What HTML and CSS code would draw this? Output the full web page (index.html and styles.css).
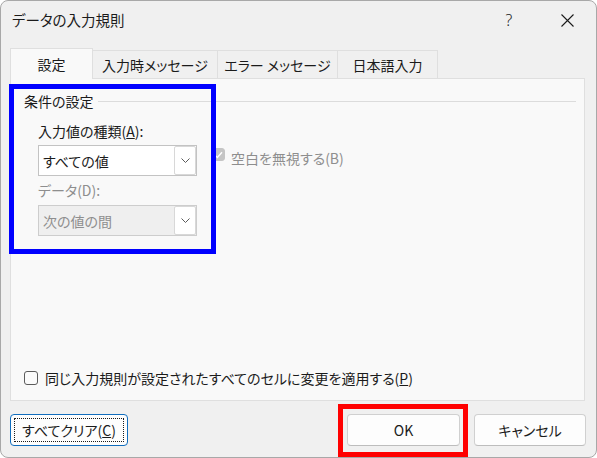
FILE: index.html
```
<!DOCTYPE html>
<html lang="ja">
<head>
<meta charset="utf-8">
<title>データの入力規則</title>
<link rel="stylesheet" href="styles.css">
</head>
<body>
<div class="window">
  <div class="titlebar">
    <span class="title">データの入力規則</span>
    <span class="cap help">?</span>
    <span class="cap close">
      <svg width="13" height="13" viewBox="0 0 13 13"><path d="M0.5 0.5 L12.5 12.5 M12.5 0.5 L0.5 12.5" stroke="#1b1b1b" stroke-width="1.1" fill="none"/></svg>
    </span>
  </div>

  <div class="tabs">
    <div class="tab active tab-1">設定</div>
    <div class="tab tab-2">入力時メッセージ</div>
    <div class="tab tab-3">エラー メッセージ</div>
    <div class="tab tab-4">日本語入力</div>
  </div>

  <div class="panel">
    <div class="group-head">
      <span class="group-label">条件の設定</span>
      <span class="group-line"></span>
    </div>
    <div class="group-body">
      <div class="field-label">入力値の種類(<u>A</u>):</div>
      <div class="row">
        <div class="combo">
          <span class="combo-text">すべての値</span>
          <span class="combo-btn">
            <svg width="9" height="5" viewBox="0 0 9 5"><path d="M0.5 0.5 L4.5 4.5 L8.5 0.5" stroke="#5a5a5a" stroke-width="1" fill="none"/></svg>
          </span>
        </div>
        <div class="check disabled">
          <span class="box checked">
            <svg width="9" height="8" viewBox="0 0 9 8"><path d="M1 4.2 L3.4 6.5 L8 1.2" stroke="#ffffff" stroke-width="1.4" fill="none"/></svg>
          </span>
          <span>空白を無視する(B)</span>
        </div>
      </div>
      <div class="field-label disabled">データ(D):</div>
      <div class="combo disabled combo-2">
        <span class="combo-text">次の値の間</span>
        <span class="combo-btn">
          <svg width="9" height="5" viewBox="0 0 9 5"><path d="M0.5 0.5 L4.5 4.5 L8.5 0.5" stroke="#5a5a5a" stroke-width="1" fill="none"/></svg>
        </span>
      </div>
    </div>
    <div class="apply">
      <span class="box"></span>
      <span>同じ入力規則が設定されたすべてのセルに変更を適用する(<u>P</u>)</span>
    </div>
  </div>

  <div class="buttons">
    <button class="btn btn-clear"><span class="focus-ring">すべてクリア(<u>C</u>)</span></button>
    <button class="btn btn-ok">OK</button>
    <button class="btn btn-cancel">キャンセル</button>
  </div>

  <div class="mark mark-blue"></div>
  <div class="mark mark-red"></div>
</div>
</body>
</html>
```

FILE: styles.css
```
html, body {
  margin: 0;
  padding: 0;
  background: #ffffff;
}

body {
  font-family: "Noto Sans CJK JP", "Noto Sans", sans-serif;
  font-size: 14px;
  color: #1b1b1b;
  font-feature-settings: "palt";
}

.window {
  position: relative;
  box-sizing: border-box;
  width: 597px;
  height: 458px;
  border: 1px solid #a8a8a8;
  border-radius: 8px;
  background: #f0f0f0;
  display: flex;
  flex-direction: column;
  overflow: hidden;
}

/* title bar */
.titlebar {
  height: 38px;
  display: flex;
  align-items: center;
  padding: 0 6px 0 11px;
  flex-shrink: 0;
}

.title {
  flex: 1;
  line-height: 20px;
  font-size: 14.5px;
}

.cap {
  width: 46px;
  height: 38px;
  display: flex;
  align-items: center;
  justify-content: center;
}

.help {
  margin-right: 12px;
  font-family: "Noto Sans", sans-serif;
  font-weight: 300;
  font-size: 16px;
}

/* tabs */
.tabs {
  display: flex;
  align-items: flex-end;
  height: 30px;
  margin: 9px 0 0 9px;
  flex-shrink: 0;
}

.tab {
  box-sizing: border-box;
  height: 28px;
  border: 1px solid #dfdfdf;
  border-bottom: none;
  background: #f0f0f0;
  display: flex;
  align-items: center;
  justify-content: center;
  line-height: 20px;
  margin-right: -1px;
}

.tab.active {
  height: 31px;
  background: #f9f9f9;
  margin-bottom: -1px;
  position: relative;
  z-index: 1;
}

.tab-1 { width: 83px; }
.tab-2 { width: 126px; }
.tab-3 { width: 121px; }
.tab-4 { width: 101px; }

/* panel */
.panel {
  box-sizing: border-box;
  height: 323px;
  margin: 0 11px 0 9px;
  border: 1px solid #dfdfdf;
  background: #f9f9f9;
  display: flex;
  flex-direction: column;
  padding: 12px 8px 12px 13px;
  flex-shrink: 0;
}

.group-head {
  display: flex;
  align-items: center;
  line-height: 20px;
}

.group-line {
  flex: 1;
  border-top: 1px solid #dcdcdc;
  margin-left: 4px;
}

.group-body {
  padding-left: 14px;
}

.field-label {
  line-height: 20px;
  margin-top: 10px;
}

.field-label.disabled {
  margin-top: 4px;
  color: #8e8e8e;
}

.row {
  display: flex;
  align-items: flex-start;
  margin-top: 4px;
}

.combo {
  box-sizing: border-box;
  width: 159px;
  height: 31px;
  border: 1px solid #c3c3c3;
  background: #ffffff;
  display: flex;
  align-items: stretch;
  padding-left: 4px;
}

.combo-text {
  flex: 1;
  display: flex;
  align-items: center;
  line-height: 20px;
}

.combo-btn {
  box-sizing: border-box;
  width: 22px;
  border: 1px solid #d8d8d8;
  border-radius: 2px;
  background: #ffffff;
  display: flex;
  align-items: center;
  justify-content: center;
}

.combo.disabled {
  background: #efefef;
  border-color: #cdcdcd;
  color: #8e8e8e;
}

.combo-2 {
  margin-top: 5px;
}

.check {
  display: flex;
  align-items: flex-start;
  margin: 3px 0 0 15px;
  line-height: 20px;
}

.check.disabled {
  color: #8e8e8e;
}

.box {
  box-sizing: border-box;
  width: 14px;
  height: 14px;
  border: 1px solid #5c5c5c;
  border-radius: 3px;
  background: #fbfbfb;
  flex-shrink: 0;
  display: flex;
  align-items: center;
  justify-content: center;
}

.check .box {
  width: 13px;
  height: 13px;
  margin-right: 6px;
}

.box.checked {
  background: #c5c5c5;
  border-color: #c5c5c5;
}

.apply {
  margin-top: auto;
  display: flex;
  align-items: center;
  line-height: 20px;
}

.apply .box {
  margin-right: 7px;
}

/* buttons */
.buttons {
  display: flex;
  gap: 14px;
  margin: 13px 10px 0 9px;
}

.btn {
  box-sizing: border-box;
  height: 32px;
  padding: 0;
  border: 1px solid #d0d0d0;
  border-bottom-color: #bdbdbd;
  border-radius: 4px;
  background: #fdfdfd;
  font: inherit;
  color: inherit;
  line-height: 20px;
}

.btn-clear {
  width: 118px;
  margin-right: auto;
  padding: 3px;
  border: 1px solid #0f6cbd;
}

.focus-ring {
  box-sizing: border-box;
  height: 100%;
  display: flex;
  align-items: center;
  justify-content: center;
  border: 1px dotted #1b1b1b;
}

.btn-ok { width: 113px; }
.btn-cancel { width: 112px; }

/* annotation overlays */
.mark {
  position: absolute;
  box-sizing: border-box;
  border: 5px solid;
  pointer-events: none;
  z-index: 5;
}

.mark-blue {
  border-color: #0000ff;
  left: 8px;
  top: 83px;
  width: 207px;
  height: 170px;
}

.mark-red {
  border-color: #ff0000;
  left: 337px;
  top: 403px;
  width: 130px;
  height: 53px;
}
```
